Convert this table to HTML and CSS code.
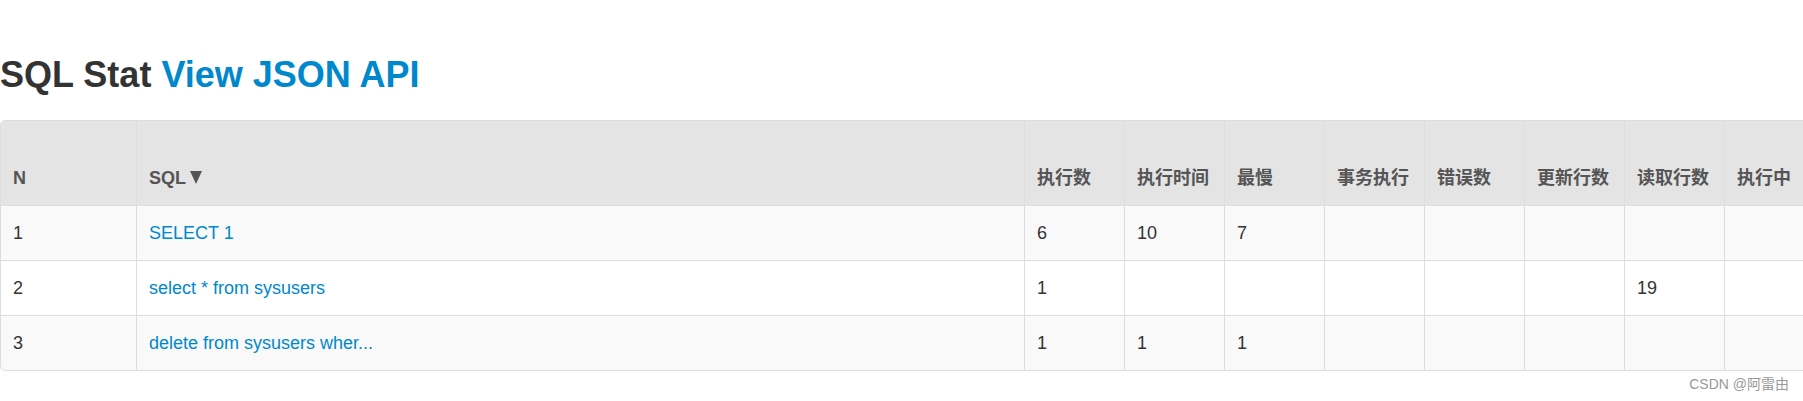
FILE: index.html
```html
<!DOCTYPE html>
<html>
<head>
    <meta charset="utf-8">
    <link rel="stylesheet" href="styles.css">
</head>
<body>
    <!-- Page Title -->
    <h1 class="title">SQL Stat <a href="#">View JSON API</a></h1>

    <!-- Stat Table -->
    <div class="table-wrap">
        <table class="stat-table">
            <thead>
                <tr>
                    <th class="col-n">N</th>
                    <th class="col-sql">SQL<span class="sort"></span></th>
                    <th class="col-num">执行数</th>
                    <th class="col-num">执行时间</th>
                    <th class="col-num">最慢</th>
                    <th class="col-num">事务执行</th>
                    <th class="col-num">错误数</th>
                    <th class="col-num">更新行数</th>
                    <th class="col-num">读取行数</th>
                    <th class="col-num">执行中</th>
                </tr>
            </thead>
            <tbody>
                <tr>
                    <td>1</td>
                    <td><a href="#">SELECT 1</a></td>
                    <td>6</td>
                    <td>10</td>
                    <td>7</td>
                    <td></td>
                    <td></td>
                    <td></td>
                    <td></td>
                    <td></td>
                </tr>
                <tr>
                    <td>2</td>
                    <td><a href="#">select * from sysusers</a></td>
                    <td>1</td>
                    <td></td>
                    <td></td>
                    <td></td>
                    <td></td>
                    <td></td>
                    <td>19</td>
                    <td></td>
                </tr>
                <tr>
                    <td>3</td>
                    <td><a href="#">delete from sysusers wher...</a></td>
                    <td>1</td>
                    <td>1</td>
                    <td>1</td>
                    <td></td>
                    <td></td>
                    <td></td>
                    <td></td>
                    <td></td>
                </tr>
            </tbody>
        </table>
    </div>

    <!-- Watermark -->
    <div class="watermark">CSDN @阿雷由</div>
</body>
</html>
```

FILE: styles.css
```css
body {
    position: relative;
    margin: 0;
    min-height: 100vh;
    background: #fff;
    color: #333;
    font-family: "Liberation Sans", "Noto Sans CJK SC", sans-serif;
    font-size: 18px;
    overflow: hidden;
}
a {
    color: #0088cc;
    text-decoration: none;
}

/* Title */
.title {
    margin: 55px 0 25px;
    font-size: 36px;
    line-height: 40px;
    font-weight: bold;
    color: #333;
}

/* Table */
.table-wrap {
    width: 100%;
    overflow: hidden;
}
.stat-table {
    table-layout: fixed;
    width: 1825px;
    border: 1px solid #ddd;
    border-left: 0;
    border-collapse: separate;
    border-spacing: 0;
    border-radius: 5px;
}
.stat-table th,
.stat-table td {
    box-sizing: border-box;
    padding: 14px 12px;
    line-height: 26px;
    text-align: left;
    border-left: 1px solid #ddd;
    white-space: nowrap;
    overflow: hidden;
}
.stat-table th {
    padding-top: 44px;
    vertical-align: bottom;
    background: #e4e4e4;
    color: #555;
    font-weight: bold;
}
/* sort arrow after the column name */
.stat-table th .sort {
    display: inline-block;
    width: 0;
    height: 0;
    margin-left: 4px;
    border-left: 6px solid transparent;
    border-right: 6px solid transparent;
    border-top: 13px solid #555;
}
.stat-table td {
    border-top: 1px solid #ddd;
    vertical-align: middle;
}
.stat-table tbody tr:nth-child(odd) td {
    background: #f9f9f9;
}
.stat-table th:first-child {
    border-top-left-radius: 5px;
}
.stat-table tbody tr:last-child td:first-child {
    border-bottom-left-radius: 5px;
}
.col-n {
    width: 136px;
}
.col-sql {
    width: 888px;
}
.col-num {
    width: 100px;
}

/* Watermark */
.watermark {
    position: absolute;
    right: 14px;
    bottom: 7px;
    font-size: 14px;
    line-height: 20px;
    color: #999;
}
```
